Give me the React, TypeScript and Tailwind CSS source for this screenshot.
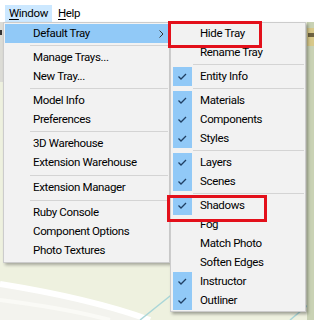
import React from 'react';

type Entry = { label: string; checked?: boolean } | 'sep' | 'sep6';

const mainItems: Entry[] = [
  { label: 'Default Tray' },
  'sep',
  { label: 'Manage Trays...' },
  { label: 'New Tray...' },
  'sep',
  { label: 'Model Info' },
  { label: 'Preferences' },
  'sep',
  { label: '3D Warehouse' },
  { label: 'Extension Warehouse' },
  'sep6',
  { label: 'Extension Manager' },
  'sep6',
  { label: 'Ruby Console' },
  { label: 'Component Options' },
  { label: 'Photo Textures' },
];

const trayItems: Entry[] = [
  { label: 'Hide Tray' },
  { label: 'Rename Tray' },
  'sep',
  { label: 'Entity Info', checked: true },
  'sep',
  { label: 'Materials', checked: true },
  { label: 'Components', checked: true },
  { label: 'Styles', checked: true },
  'sep',
  { label: 'Layers', checked: true },
  { label: 'Scenes', checked: true },
  'sep',
  { label: 'Shadows', checked: true },
  { label: 'Fog' },
  { label: 'Match Photo' },
  { label: 'Soften Edges' },
  { label: 'Instructor', checked: true },
  { label: 'Outliner', checked: true },
];

const font = { fontFamily: 'Roboto, "Noto Sans", sans-serif' };

// tick used in the check column of the tray submenu
const Check = () => (
  <svg width="19" height="19" viewBox="0 0 19 19" className="block">
    <path d="M5.5 9.5 L8 12 L13 7" fill="none" stroke="#1f3f63" strokeWidth="1.3" />
  </svg>
);

const Separator = ({ indent, h }: { indent: string; h: string }) => (
  <div className={`${h} flex items-center ${indent}`}>
    <div className="h-px w-full bg-[#d4d4d4]" />
  </div>
);

const App: React.FC = () => {
  return (
    <div className="relative w-[314px] h-[320px] overflow-hidden bg-[#eef1df] text-[11.5px] tracking-[-0.35px] text-black" style={font}>
      {/* viewport picture behind the menus */}
      <svg className="absolute inset-0" width="314" height="320" viewBox="0 0 314 320">
        <rect x="0" y="0" width="314" height="320" fill="#eef1df" />
        <rect x="0" y="22" width="3" height="60" fill="#dcdcd6" />
        <rect x="0" y="30" width="2" height="5" fill="#333" />
        <path d="M0 282 C40 290 90 300 150 318 L150 320 L0 320 Z" fill="#f3f3ee" />
        <path d="M0 284 C50 292 100 302 150 320" fill="none" stroke="#ffffff" strokeWidth="6" />
        <path d="M0 300 C40 305 80 312 110 320" fill="none" stroke="#fafaf6" strokeWidth="4" />
        <path d="M140 320 L175 292" stroke="#a9d6d8" strokeWidth="1.5" />
        <path d="M290 320 L314 300" stroke="#a9d6d8" strokeWidth="1.5" />
        <rect x="307" y="22" width="7" height="298" fill="#c9d2b4" />
        <rect x="307" y="28" width="7" height="18" fill="#d8c98a" />
        <rect x="308" y="33" width="6" height="4" fill="#6d6240" />
      </svg>

      {/* menu bar */}
      <div className="relative h-[22px] bg-white flex items-center pl-[5px]">
        <div className="w-[47px] h-[17px] mt-[4px] pl-[4px] pt-px bg-[#cce8ff] flex items-center">
          <span><span className="underline underline-offset-2">W</span>indow</span>
        </div>
        <div className="h-[17px] mt-[4px] pl-[6px] pt-px flex items-center">
          <span><span className="underline underline-offset-2">H</span>elp</span>
        </div>
      </div>

      {/* Window menu */}
      <div className="absolute left-[3px] top-[22px] w-[167px] border border-[#cccccc] bg-[#f2f2f2] p-px pb-[2px] shadow-[2px_2px_3px_rgba(0,0,0,0.3)]">
        {mainItems.map((it, i) => {
          if (it === 'sep') return <Separator key={i} indent="pl-[25px]" h="h-[5px]" />;
          if (it === 'sep6') return <Separator key={i} indent="pl-[25px]" h="h-[6px]" />;
          const active = it.label === 'Default Tray';
          return (
            <div key={i} className={`h-[19px] flex items-center pl-[28px] pr-[4px] ${active ? 'bg-[#91c9f7]' : ''}`}>
              <span className="flex-1 whitespace-nowrap pt-px">{it.label}</span>
              {active && (
                <svg width="5" height="8" viewBox="0 0 5 8">
                  <path d="M0.5 0.5 L4 4 L0.5 7.5" fill="none" stroke="#333" strokeWidth="1" />
                </svg>
              )}
            </div>
          );
        })}
      </div>

      {/* Default Tray submenu */}
      <div className="absolute left-[170px] top-[22px] w-[136px] border border-[#cccccc] bg-[#f2f2f2] py-px pl-[2px] pr-px shadow-[2px_2px_3px_rgba(0,0,0,0.35)]">
        {trayItems.map((it, i) => {
          if (it === 'sep' || it === 'sep6') return <Separator key={i} indent="pl-[20px]" h="h-[5px]" />;
          return (
            <div key={i} className="h-[19px] flex items-center">
              <div className={`w-[19px] h-[19px] shrink-0 ${it.checked ? 'bg-[#91c9f7]' : ''}`}>
                {it.checked && <Check />}
              </div>
              <span className="ml-[8px] whitespace-nowrap pt-px">{it.label}</span>
            </div>
          );
        })}
      </div>

      {/* red callouts */}
      <div className="absolute left-[168px] top-[21px] w-[94px] h-[27px] border-[3px] border-[#e3101b]" />
      <div className="absolute left-[167px] top-[195px] w-[100px] h-[27px] border-[3px] border-[#e3101b]" />
    </div>
  );
};

export default App;
